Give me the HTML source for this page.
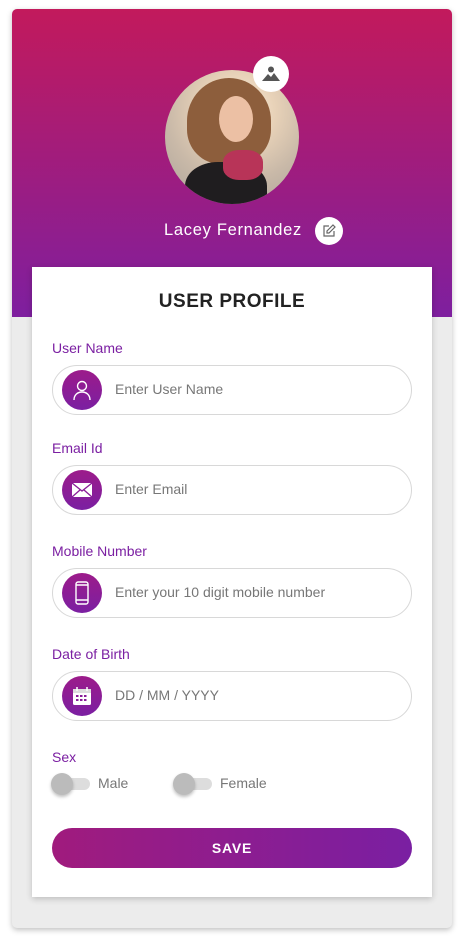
<!DOCTYPE html>
<html><head><style>
*{margin:0;padding:0;box-sizing:border-box}
body{width:464px;height:943px;background:#fff;font-family:"Liberation Sans",sans-serif;position:relative;overflow:hidden}
.outer{position:absolute;left:12px;top:9px;width:440px;height:919px;background:#ececec;border-radius:5px;box-shadow:0 2px 6px rgba(0,0,0,.25);overflow:hidden}
.hdr{position:absolute;left:0;top:0;width:440px;height:308px;background:linear-gradient(#c21a5c,#7e1f9f)}
.card{position:absolute;left:32px;top:267px;width:400px;height:630px;background:#fff;box-shadow:0 2px 6px rgba(0,0,0,.2)}
.abs{position:absolute}
.lbl{position:absolute;left:52px;color:#7b1fa2;font-size:14px}
.inp{position:absolute;left:52px;width:360px;height:50px;border:1px solid #d8d8d8;border-radius:25px}
.ic{position:absolute;left:9px;top:4px;width:40px;height:40px;border-radius:50%;background:linear-gradient(#9c1b8a,#7b1fa2);display:flex;align-items:center;justify-content:center}
.ph{position:absolute;left:62px;top:15px;color:#777;font-size:14px}
.tg{position:absolute;top:778px;width:38px;height:12px;border-radius:6px;background:#ddd}
.tg i{position:absolute;left:-1px;top:-5px;width:22px;height:22px;border-radius:50%;background:#bbb;box-shadow:0 2px 3px rgba(0,0,0,.25)}
</style></head><body>
<div class="outer"><div class="hdr"></div></div>
<div class="abs" style="left:165px;top:70px;width:134px;height:134px;border-radius:50%;overflow:hidden;background:radial-gradient(circle at 55% 30%,#fbeedd 0,#e8d2b8 30%,#c9b9a8 60%,#a9a199 100%)">
 <div class="abs" style="left:22px;top:8px;width:84px;height:86px;border-radius:50% 50% 40% 40%;background:#8d5e3c"></div>
 <div class="abs" style="left:54px;top:26px;width:34px;height:46px;border-radius:50%;background:#ecc0a4"></div>
 <div class="abs" style="left:20px;top:92px;width:82px;height:60px;border-radius:40% 40% 0 0;background:#1f1d1f"></div>
 <div class="abs" style="left:58px;top:80px;width:40px;height:30px;border-radius:40%;background:#b83458"></div>
</div>
<div class="abs" style="left:253px;top:56px;width:36px;height:36px;border-radius:50%;background:#fff;display:flex;align-items:center;justify-content:center">
<svg width="20" height="16" viewBox="0 0 20 16"><circle cx="10" cy="3.5" r="3" fill="#555"/><path d="M1 15 L7 8 L10 11 L13 7 L19 15Z" fill="#555"/></svg></div>
<div class="abs" style="left:164px;top:221px;color:#fff;font-size:16.5px;letter-spacing:.7px">Lacey Fernandez</div>
<div class="abs" style="left:315px;top:217px;width:28px;height:28px;border-radius:50%;background:#fff;display:flex;align-items:center;justify-content:center">
<svg width="14" height="14" viewBox="0 0 14 14" fill="none" stroke="#666" stroke-width="1.2"><path d="M7 2H2v10h10V7"/><path d="M11 1l2 2-6 6H5V7z"/></svg></div>
<div class="card"></div>
<div class="abs" style="left:32px;top:291px;width:400px;text-align:center;font-weight:bold;font-size:19px;color:#222;letter-spacing:.5px">USER PROFILE</div>

<div class="lbl" style="top:340px">User Name</div>
<div class="inp" style="top:365px"><div class="ic"><svg width="20" height="22" viewBox="0 0 20 22" fill="none" stroke="#fff" stroke-width="1.4"><circle cx="10" cy="7" r="4.5"/><path d="M2 21c0-5 3.5-8 8-8s8 3 8 8"/></svg></div><div class="ph">Enter User Name</div></div>

<div class="lbl" style="top:440px">Email Id</div>
<div class="inp" style="top:465px"><div class="ic"><svg width="22" height="16" viewBox="0 0 22 16"><rect x="1" y="1" width="20" height="14" fill="#fff"/><path d="M1 1l10 8 10-8M1 15l8-7M21 15l-8-7" stroke="#8a1d98" stroke-width="1.3" fill="none"/></svg></div><div class="ph">Enter Email</div></div>

<div class="lbl" style="top:543px">Mobile Number</div>
<div class="inp" style="top:568px"><div class="ic"><svg width="14" height="24" viewBox="0 0 14 24" fill="none" stroke="#fff" stroke-width="1.4"><rect x="1" y="1" width="12" height="22" rx="2"/><path d="M1 4h12M1 19h12"/></svg></div><div class="ph">Enter your 10 digit mobile number</div></div>

<div class="lbl" style="top:646px">Date of Birth</div>
<div class="inp" style="top:671px"><div class="ic"><svg width="20" height="20" viewBox="0 0 20 20"><rect x="1" y="3" width="18" height="16" rx="1.5" fill="#fff"/><rect x="1" y="3" width="18" height="4" fill="#ddd"/><g fill="#8a1d98"><rect x="4" y="9" width="2.5" height="2"/><rect x="8" y="9" width="2.5" height="2"/><rect x="12" y="9" width="2.5" height="2"/><rect x="4" y="13" width="2.5" height="2"/><rect x="8" y="13" width="2.5" height="2"/><rect x="12" y="13" width="2.5" height="2"/></g><path d="M5 1v4M15 1v4" stroke="#fff" stroke-width="1.5"/></svg></div><div class="ph">DD / MM / YYYY</div></div>

<div class="lbl" style="top:749px">Sex</div>
<div class="tg" style="left:52px"><i></i></div>
<div class="abs" style="left:98px;top:775px;color:#777;font-size:14px">Male</div>
<div class="tg" style="left:174px"><i></i></div>
<div class="abs" style="left:220px;top:775px;color:#777;font-size:14px">Female</div>

<div class="abs" style="left:52px;top:828px;width:360px;height:40px;border-radius:20px;background:linear-gradient(90deg,#a01b7d,#7a1fa2);color:#fff;font-weight:bold;font-size:14px;letter-spacing:.8px;text-align:center;line-height:40px">SAVE</div>
</body></html>
